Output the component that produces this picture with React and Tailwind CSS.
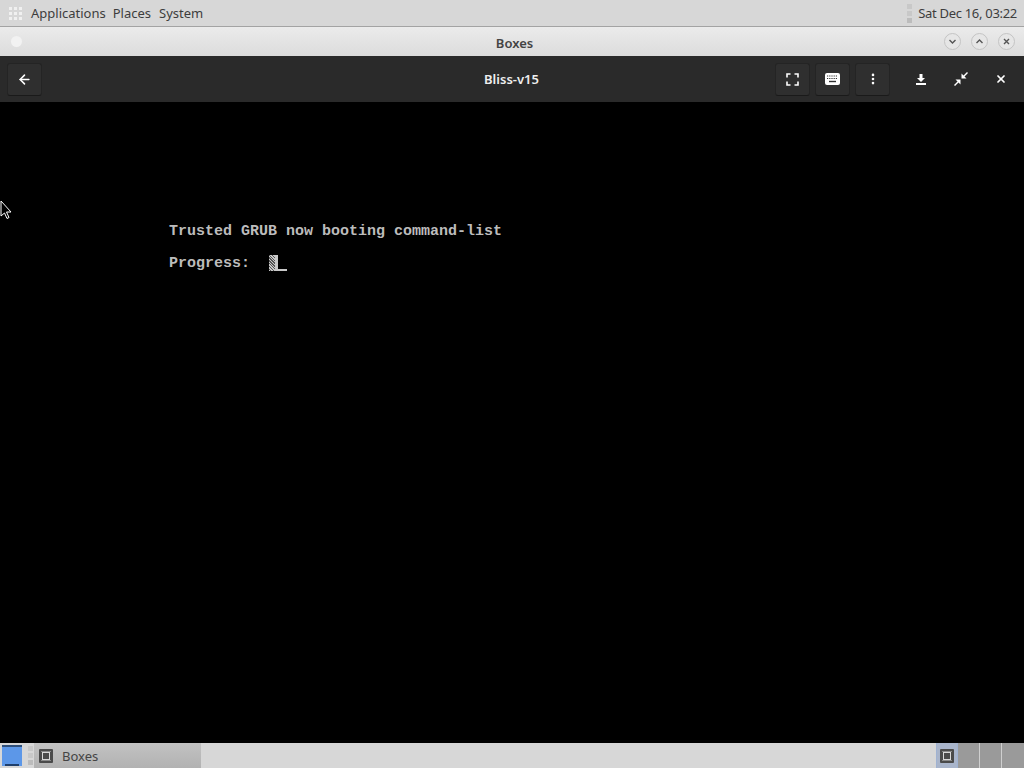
import { ArrowLeft, EllipsisVertical, X } from "lucide-react";

function HeaderButton({ children }) {
  return (
    <div className="flex h-[33px] w-[35px] items-center justify-center rounded-[3px] border border-[#242424] border-b-[#1a1a1a] bg-[#2f2f2f] text-white">
      {children}
    </div>
  );
}

function PlainButton({ children }) {
  return <div className="flex h-[33px] w-[40px] items-center justify-center text-white">{children}</div>;
}

function WindowButton({ d }) {
  return (
    <div className="flex h-[17px] w-[17px] items-center justify-center rounded-full border border-[#c4c4c4] bg-[#e6e6e6]">
      <svg width="9" height="9" viewBox="0 0 9 9" fill="none" stroke="#555" strokeWidth="1.4">
        <path d={d} />
      </svg>
    </div>
  );
}

function BoxesIcon({ size = 14 }) {
  return (
    <svg width={size} height={size} viewBox="0 0 14 14">
      <rect width="14" height="14" rx="1" fill="#4a4a4a" />
      <rect x="3.5" y="3.5" width="7" height="7" fill="none" stroke="#d8d8d8" strokeWidth="1" />
      <path d="M2 2.5h10M2 11.5h10" stroke="#8a8a8a" strokeWidth="1" fill="none" />
    </svg>
  );
}

function AppGrid() {
  return (
    <div className="grid grid-cols-3 gap-[2px]">
      {Array.from({ length: 9 }).map((_, i) => (
        <div key={i} className="h-[3px] w-[3px] bg-[#f0f0f0]" />
      ))}
    </div>
  );
}

function Grip() {
  return (
    <div className="flex flex-col gap-[2px]">
      <div className="h-[5px] w-[5px] bg-[#c8c8c8]" />
      <div className="h-[5px] w-[5px] bg-[#c8c8c8]" />
      <div className="h-[5px] w-[5px] bg-[#bcbcbc]" />
    </div>
  );
}

export default function App() {
  return (
    <div className="relative flex h-[768px] w-[1024px] flex-col overflow-hidden bg-black font-['Noto_Sans',sans-serif]">
      {/* top panel */}
      <div className="flex h-[27px] shrink-0 items-center justify-between border-b border-[#a3a3a3] bg-[#d7d7d7] pr-[7px] pl-[9px] text-[13px] text-[#3d3d3d]">
        <div className="flex items-center">
          <AppGrid />
          <span className="mt-[1px] ml-[9px]">Applications</span>
          <span className="mt-[1px] ml-[7px]">Places</span>
          <span className="mt-[1px] ml-[8px]">System</span>
        </div>
        <div className="flex items-center gap-[6px]">
          <Grip />
          <span className="mt-[1px] tracking-[-0.3px]">Sat Dec 16, 03:22</span>
        </div>
      </div>

      {/* window title */}
      <div className="flex h-[29px] shrink-0 items-center justify-between bg-gradient-to-b from-[#ebebeb] to-[#dcdcdc] pr-[9px] pl-[11px]">
        <div className="h-[11px] w-[11px] rounded-full bg-[#f2f2f2]" />
        <span className="mt-[4px] ml-[63px] text-[13px] font-semibold text-[#444]">Boxes</span>
        <div className="flex items-center gap-[10px]">
          <WindowButton d="M1.5 3l3 3 3-3" />
          <WindowButton d="M1.5 6l3-3 3 3" />
          <WindowButton d="M2 2l5 5M7 2l-5 5" />
        </div>
      </div>

      {/* header bar */}
      <div className="relative flex h-[46px] shrink-0 items-center justify-between bg-[#2a2a2a] pr-[3px] pl-[7px]">
        <HeaderButton>
          <ArrowLeft size={15} strokeWidth={2.5} />
        </HeaderButton>
        <span className="absolute right-[1px] left-0 mt-[2px] text-center text-[13px] font-semibold text-[#eeeeee]">Bliss-v15</span>
        <div className="flex items-center">
          <div className="flex items-center gap-[5px] pr-[11px]">
            <HeaderButton>
              <svg width="13" height="13" viewBox="0 0 13 13" fill="none" stroke="white" strokeWidth="1.6">
                <path d="M1 4.5V1h3.5M8.5 1H12v3.5M12 8.5V12H8.5M4.5 12H1V8.5" />
              </svg>
            </HeaderButton>
            <HeaderButton>
              <svg width="15" height="12" viewBox="0 0 15 12">
                <rect width="15" height="12" rx="2" fill="white" />
                <path d="M2 3h11M2 5.5h11" stroke="#303030" strokeWidth="1.2" strokeDasharray="1.2 1" />
                <path d="M4 8.5h7" stroke="#303030" strokeWidth="1.4" />
              </svg>
            </HeaderButton>
            <HeaderButton>
              <EllipsisVertical size={14} strokeWidth={2.5} />
            </HeaderButton>
          </div>
          <PlainButton>
            <svg width="10" height="11" viewBox="0 0 10 11" fill="white">
              <path d="M3.5 0h3v4H9L5 8 1 4h2.5zM0 9h10v2H0z" />
            </svg>
          </PlainButton>
          <PlainButton>
            <svg width="14" height="14" viewBox="0 0 14 14" fill="white">
              <path d="M13 0l1 1-3.5 3.5L12.5 6.5H7.5V1.5l2 2zM1 14l-1-1 3.5-3.5L1.5 7.5h5v5l-2-2z" />
            </svg>
          </PlainButton>
          <PlainButton>
            <X size={12} strokeWidth={3.5} />
          </PlainButton>
        </div>
      </div>

      {/* console */}
      <div className="flex-1 bg-black pt-[120px] pl-[169px] font-['Liberation_Mono',monospace] text-[15px] leading-[20px] font-bold text-[#bcbcbc]">
        <div>Trusted GRUB now booting command-list</div>
        <div className="mt-[12px] flex items-center">
          <span>Progress:</span>
          <div className="relative ml-[19px] h-[16px] w-[18px] -translate-y-[1px]">
            <div className="h-[16px] w-[9px] bg-[repeating-linear-gradient(45deg,#c8c8c8_0,#c8c8c8_1px,#555_1px,#555_2px)]" />
            <div className="absolute right-0 bottom-0 left-[6px] h-[2px] bg-[#c8c8c8]" />
            <div className="absolute bottom-0 left-[6px] h-[16px] w-[3px] bg-[#c8c8c8]" />
          </div>
        </div>
      </div>

      {/* bottom panel */}
      <div className="flex h-[25px] shrink-0 items-stretch bg-[#d7d7d7] text-[13px] text-[#444]">
        <div className="mt-[2px] mb-[2px] ml-[2px] flex w-[20px] flex-col bg-[#5c97e8]">
          <div className="h-[2px] bg-[#2f4f7a]" />
          <div className="flex-1" />
          <div className="mx-[3px] h-[2px] bg-[#1f3f6c]" />
        </div>
        <div className="ml-[6px] flex items-center">
          <Grip />
        </div>
        <div className="ml-[1px] flex w-[167px] items-center bg-gradient-to-b from-[#c2c2c2] to-[#b2b2b2] pl-[5px]">
          <BoxesIcon />
          <span className="mt-[2px] ml-[9px]">Boxes</span>
        </div>
        <div className="flex-1" />
        <div className="flex w-[22px] items-center justify-center border-x border-[#9fb2d2] bg-[#a9b5cb]">
          <BoxesIcon />
        </div>
        <div className="flex w-[22px] border-r border-[#cfcfcf] bg-[#9a9a9a]" />
        <div className="flex w-[22px] border-r border-[#cfcfcf] bg-[#9a9a9a]" />
        <div className="flex w-[22px] bg-[#9a9a9a]" />
      </div>

      {/* mouse pointer */}
      <svg className="absolute top-[200px] left-0" width="13" height="20" viewBox="0 0 13 20">
        <path d="M1 1v15l3.5-3 2.5 5.5 2-1L6.5 12H11z" fill="#000" stroke="#fff" strokeWidth="1" />
      </svg>
    </div>
  );
}
